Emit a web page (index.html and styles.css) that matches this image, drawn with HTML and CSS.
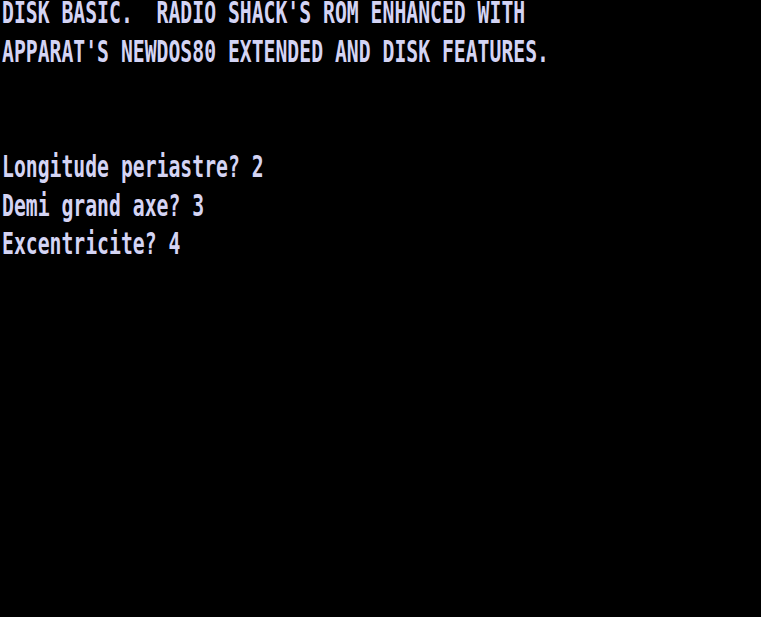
FILE: index.html
```
<!DOCTYPE html>
<html>
<head>
<meta charset="utf-8">
<link rel="stylesheet" href="styles.css">
</head>
<body>
<div class="screen">
<div class="row"><span class="txt">DISK BASIC.  RADIO SHACK'S ROM ENHANCED WITH</span></div>
<div class="row"><span class="txt">APPARAT'S NEWDOS80 EXTENDED AND DISK FEATURES.</span></div>
<div class="row"></div>
<div class="row"></div>
<div class="row"><span class="txt">Longitude periastre? 2</span></div>
<div class="row"><span class="txt">Demi grand axe? 3</span></div>
<div class="row"><span class="txt">Excentricite? 4</span></div>
</div>
</body>
</html>
```
FILE: styles.css
```
html, body {
  margin: 0;
  padding: 0;
  background: #000;
  width: 761px;
  height: 617px;
  overflow: hidden;
}
.screen {
  display: flex;
  flex-direction: column;
  padding-left: 2px;
}
.row {
  height: 38.56px;
  flex: none;
}
.txt {
  display: block;
  font-family: "DejaVu Sans Mono", monospace;
  font-weight: bold;
  font-size: 19.75px;
  line-height: 1;
  white-space: pre;
  color: #d4d4f4;
  transform-origin: 0 0;
  transform: translateY(-1px) scaleY(1.5);
}
```
